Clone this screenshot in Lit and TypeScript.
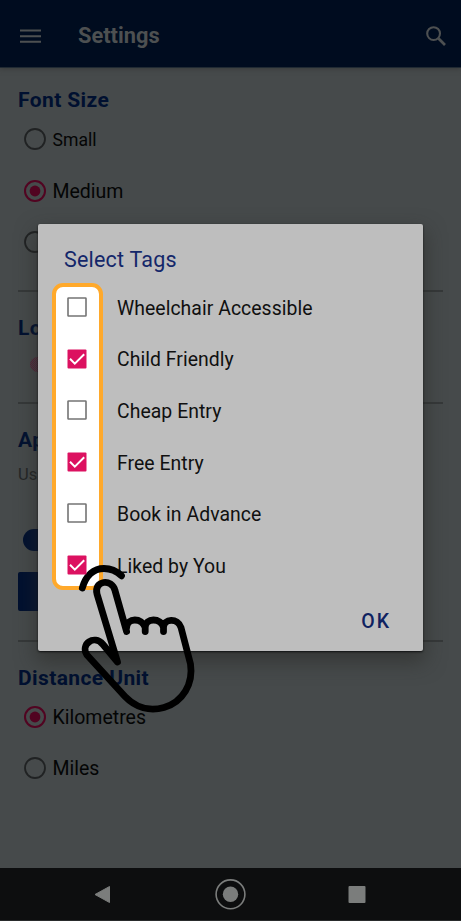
import { LitElement, html, css, svg } from "lit";
import { customElement, property } from "lit/decorators.js";

@customElement("radio-row")
class RadioRow extends LitElement {
  @property() label = "";
  @property({ type: Boolean }) checked = false;
  @property({ type: Boolean }) small = false;
  static styles = css`
    :host { display: flex; height: 51.6px; align-items: center; gap: 6.5px; padding-left: 24px; font: 19.5px Roboto, sans-serif; color: #040505; }
    svg { width: 22px; height: 22px; flex: none; margin-bottom: 1.4px; }
    .small { font-size: 17.6px; }
  `;
  render() {
    const c = this.checked ? "#510421" : "#202223";
    return html`<svg viewBox="0 0 22 22" fill="none">
        <circle cx="11" cy="11" r="10" stroke=${c} stroke-width=${this.checked ? 2 : 1.8} />
        ${this.checked ? svg`<circle cx="11" cy="11" r="5.4" fill="#510421" />` : ""}
      </svg><span class=${this.small ? "small" : ""}>${this.label}</span>`;
  }
}

@customElement("tag-row")
class TagRow extends LitElement {
  @property() label = "";
  @property({ type: Boolean }) checked = false;
  static styles = css`
    :host { display: flex; height: 51.6px; align-items: center; padding-left: 29px; gap: 30px; font: 19.4px Roboto, sans-serif; color: #101010; letter-spacing: 0.05px; white-space: nowrap; }
    svg { position: relative; z-index: 2; width: 20px; height: 20px; flex: none; margin-bottom: 1.6px; }
    span { padding-top: 1px; }
  `;
  render() {
    return html`<svg viewBox="0 0 20 20" fill="none">
        ${this.checked
          ? svg`<rect x=".5" y=".5" width="19" height="19" rx="1" fill="#dc1160" /><path d="M3 9.8 7.8 14.6 17.2 5.2" stroke="#fff" stroke-width="2" />`
          : svg`<rect x="1" y="1" width="18" height="18" rx=".6" stroke="#747474" stroke-width="1.6" />`}
      </svg><span>${this.label}</span>`;
  }
}

@customElement("app-root")
class AppRoot extends LitElement {
  static styles = css`
    :host { display: flex; flex-direction: column; position: relative; width: 461px; height: 921px; overflow: hidden; background: #464a4b; font-family: Roboto, sans-serif; }
    .bar { height: 68px; flex: none; box-sizing: border-box; display: flex; align-items: center; padding: 5px 14px 0 20px; background: #000c1f; border-bottom: 1px solid #202a33; box-shadow: 0 1px 5px #393b3b; }
    .bar h1 { flex: 1; margin: -1px 0 0 37px; font-size: 21.8px; font-weight: 700; color: #4d5051; }
    .menu { width: 21px; height: 16px; }
    .search { width: 22px; height: 22px; }
    .body { flex: 1; display: flex; flex-direction: column; padding-top: 16px; }
    h2 { margin: 0 0 0 18px; height: 30px; line-height: 32px; font-size: 21px; font-weight: 700; letter-spacing: .4px; color: #001030; white-space: nowrap; }
    hr { margin: 0 18px; width: 425px; height: 2px; border: 0; background: #353839; flex: none; }
    .fonts { height: 205.500px; }
    .loc { height: 110px; box-sizing: border-box; }
    .loc h2, .app h2 { padding-top: 20px; }
    .thumb { width: 15px; height: 15px; border-radius: 50%; background: repeating-conic-gradient(#5a2138 0 25%, #444247 0 50%) 0 0 / 2px 2px; margin: 15px 0 0 30px; }
    .app { height: 236px; }
    .note { margin: 5px 0 0 18px; height: 32px; line-height: 32px; font-size: 16.5px; color: #242627; }
    .switch { margin: 38px 0 0 23px; width: 42px; height: 22px; border-radius: 11px; background: #00102f; }
    .button { margin: 21px 0 0 18px; width: 140px; height: 39px; border-radius: 2px; background: #00102f; }
    .distance h2 { padding-top: 20px; }
    .nav { height: 53px; flex: none; box-sizing: border-box; background: #0d0e0f; border-bottom: 1px solid #292b2c; }
    .nav svg { display: block; width: 461px; height: 52px; }
    .dialog { position: absolute; left: 38px; top: 224px; width: 385px; height: 427px; box-sizing: border-box; background: #bebebe; border-radius: 2px; box-shadow: 0 1px 2px #101112, 0 9px 20px 2px rgba(40, 40, 36, .55); display: flex; flex-direction: column; }
    .title { height: 58px; box-sizing: border-box; padding: 22px 0 0 26px; font-size: 21.5px; line-height: 27px; letter-spacing: .2px; color: #14276a; }
    .tags { position: relative; }
    .mark { position: absolute; left: 14px; top: 1px; width: 51px; height: 307px; box-sizing: border-box; border: 4px solid #ffa92b; border-radius: 11px; background: #fff; }
    .ok { align-self: flex-end; margin: 15px 32px 0 0; font-size: 19.5px; line-height: 30px; font-weight: 500; letter-spacing: 2px; color: #0f2261; }
    .hand { position: absolute; left: 70px; top: 555px; width: 135px; height: 165px; }
  `;
  render() {
    const tags: [string, boolean][] = [
      ["Wheelchair Accessible", false],
      ["Child Friendly", true],
      ["Cheap Entry", false],
      ["Free Entry", true],
      ["Book in Advance", false],
      ["Liked by You", true],
    ];
    return html`
      <header class="bar">
        <svg class="menu" viewBox="0 0 21 16" stroke="#4d5051" stroke-width="2"><path d="M0 2.500H21M0 8.300H21M0 13.800H21" /></svg>
        <h1>Settings</h1>
        <svg class="search" viewBox="0 0 22 22" fill="none" stroke="#4d5051" stroke-width="2.1"><circle cx="8.6" cy="8.6" r="6.4" /><path d="M13.3 13.3 20 20" stroke-width="2.7" /></svg>
      </header>
      <main class="body">
        <section class="fonts">
          <h2>Font Size</h2>
          <radio-row label="Small" small></radio-row>
          <radio-row label="Medium" checked></radio-row>
          <radio-row></radio-row>
        </section>
        <hr />
        <section class="loc"><h2>Lo</h2><div class="thumb"></div></section>
        <hr />
        <section class="app"><h2>Ap</h2><div class="note">Us</div><div class="switch"></div><div class="button"></div></section>
        <hr />
        <section class="distance">
          <h2>Distance Unit</h2>
          <radio-row label="Kilometres" checked></radio-row>
          <radio-row label="Miles"></radio-row>
        </section>
      </main>
      <footer class="nav">
        <svg viewBox="0 0 461 52" fill="#7b7d7c">
          <path d="M95 26.5 109.5 18.5V34.5Z" stroke="#7b7d7c" stroke-linejoin="round" />
          <circle cx="230.5" cy="26.3" r="7.7" /><circle cx="230.5" cy="26.3" r="14.4" fill="none" stroke="#7b7d7c" stroke-width="1.6" />
          <rect x="348.5" y="18" width="17" height="17" rx="1" />
        </svg>
      </footer>
      <div class="dialog">
        <div class="title">Select Tags</div>
        <div class="tags">
          <div class="mark"></div>
          ${tags.map(([l, c]) => html`<tag-row .label=${l} .checked=${c}></tag-row>`)}
        </div>
        <div class="ok">OK</div>
      </div>
      <svg class="hand" viewBox="70 555 135 165" fill="none" stroke="#000" stroke-width="6.8" stroke-linecap="round" stroke-linejoin="round">
        <path d="M82.3 588C86 575 94 568.5 104 568.5C111 568.5 117 571.5 121.5 575.8" />
        <path d="M126.6 631.5 115 590.5C112 578 93.5 580.5 97 594L117.5 662 103 644.5C94 634 80 644.5 87 655L125 696.5C136 708 150 711.5 164 707.5C183 702 193.5 683.5 190.5 664L181 627.5C178 617.5 163.5 618.5 163.5 627.5V631.5V627.5C161 617.5 145.2 617.5 145.2 627.5V631.5V627.5C142 617.5 127 617.5 126.6 627.5" />
      </svg>
    `;
  }
}
